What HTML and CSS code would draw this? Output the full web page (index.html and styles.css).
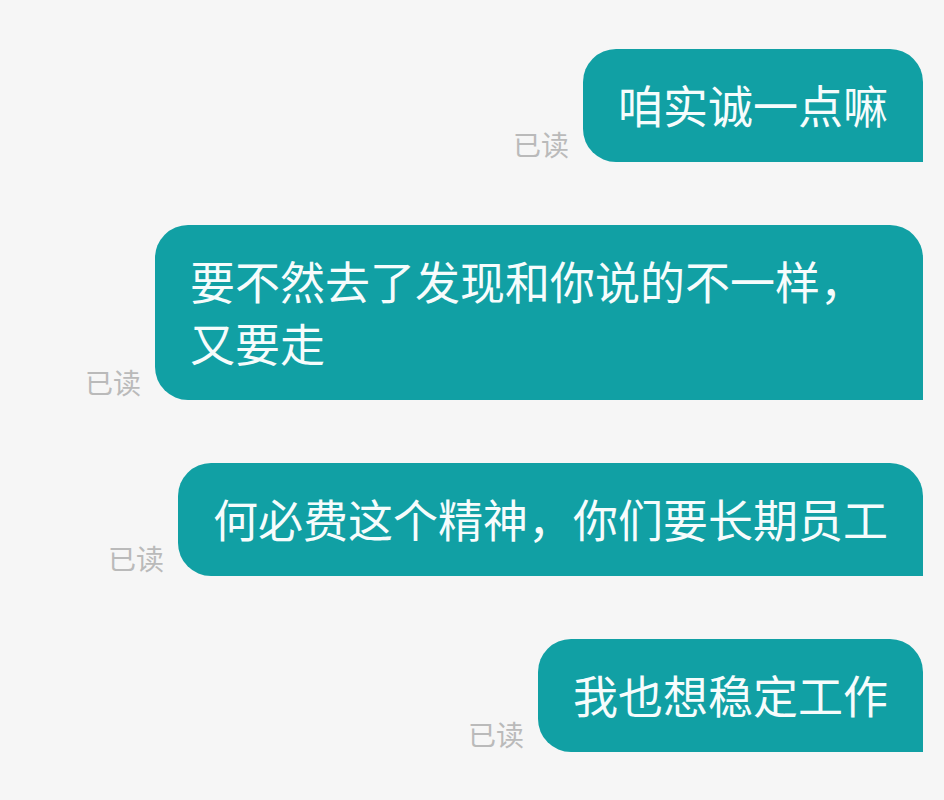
FILE: index.html
```html
<!DOCTYPE html>
<html lang="zh">
<head>
<meta charset="utf-8">
<link rel="stylesheet" href="styles.css">
</head>
<body>
<div class="chat">
  <div class="row">
    <span class="read">已读</span>
    <div class="bubble">咱实诚一点嘛</div>
  </div>
  <div class="row">
    <span class="read">已读</span>
    <div class="bubble">要不然去了发现和你说的不一样，又要走</div>
  </div>
  <div class="row">
    <span class="read">已读</span>
    <div class="bubble">何必费这个精神，你们要长期员工</div>
  </div>
  <div class="row">
    <span class="read">已读</span>
    <div class="bubble">我也想稳定工作</div>
  </div>
</div>
</body>
</html>
```
FILE: styles.css
```css
html, body {
  margin: 0;
  padding: 0;
  background: #f6f6f6;
}
body {
  font-family: "Noto Sans CJK SC", "Noto Sans", sans-serif;
}
.chat {
  display: flex;
  flex-direction: column;
  gap: 63px;
  padding: 49px 21px 0 0;
}
.row {
  display: flex;
  justify-content: flex-end;
  align-items: flex-end;
  gap: 14px;
}
.read {
  font-size: 28px;
  line-height: 36px;
  color: #bababa;
  white-space: nowrap;
}
.bubble {
  background: #11a0a4;
  color: #f6fcfc;
  font-size: 45px;
  line-height: 62px;
  padding: 25px 35px 26px;
  max-width: 698px;
  border-radius: 33px 33px 0 33px;
}
```
